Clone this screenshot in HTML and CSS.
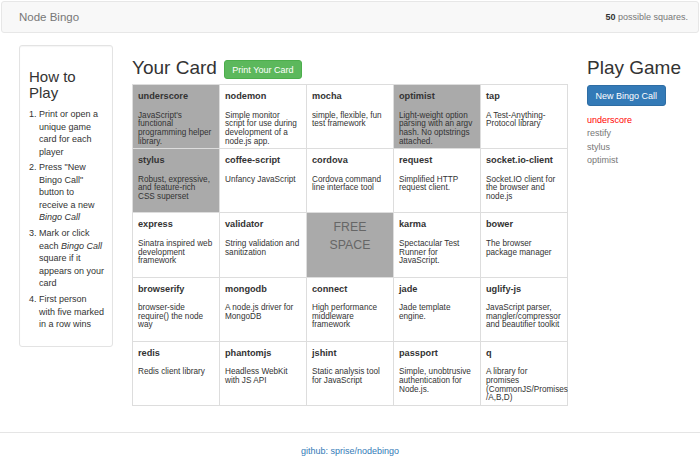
FILE: index.html
```html
<!DOCTYPE html>
<html>
<head>
<meta charset="utf-8">
<title>Node Bingo</title>
<link rel="stylesheet" href="styles.css">
</head>
<body>
<nav class="navbar">
  <span class="brand">Node Bingo</span>
  <span class="count"><b>50</b> possible squares.</span>
</nav>
<div class="page">
  <aside class="well">
    <h3>How to Play</h3>
    <ol>
      <li>Print or open a unique game card for each player</li>
      <li>Press "New Bingo Call" button to receive a new <em>Bingo Call</em></li>
      <li>Mark or click each <em>Bingo Call</em> square if it appears on your card</li>
      <li>First person with five marked in a row wins</li>
    </ol>
  </aside>
  <main class="card-col">
    <div class="card-head">
      <h2>Your Card</h2>
      <button class="btn btn-success">Print Your Card</button>
    </div>
    <div class="board">
      <div class="cell marked"><div class="title">underscore</div><div class="desc">JavaScript's functional programming helper library.</div></div>
      <div class="cell"><div class="title">nodemon</div><div class="desc">Simple monitor script for use during development of a node.js app.</div></div>
      <div class="cell"><div class="title">mocha</div><div class="desc">simple, flexible, fun test framework</div></div>
      <div class="cell marked"><div class="title">optimist</div><div class="desc">Light-weight option parsing with an argv hash. No optstrings attached.</div></div>
      <div class="cell"><div class="title">tap</div><div class="desc">A Test-Anything-Protocol library</div></div>

      <div class="cell marked"><div class="title">stylus</div><div class="desc">Robust, expressive, and feature-rich CSS superset</div></div>
      <div class="cell"><div class="title">coffee-script</div><div class="desc">Unfancy JavaScript</div></div>
      <div class="cell"><div class="title">cordova</div><div class="desc">Cordova command line interface tool</div></div>
      <div class="cell"><div class="title">request</div><div class="desc">Simplified HTTP request client.</div></div>
      <div class="cell"><div class="title">socket.io-client</div><div class="desc">Socket.IO client for the browser and node.js</div></div>

      <div class="cell"><div class="title">express</div><div class="desc">Sinatra inspired web development framework</div></div>
      <div class="cell"><div class="title">validator</div><div class="desc">String validation and sanitization</div></div>
      <div class="cell marked free">FREE<br>SPACE</div>
      <div class="cell"><div class="title">karma</div><div class="desc">Spectacular Test Runner for JavaScript.</div></div>
      <div class="cell"><div class="title">bower</div><div class="desc">The browser package manager</div></div>

      <div class="cell"><div class="title">browserify</div><div class="desc">browser-side require() the node way</div></div>
      <div class="cell"><div class="title">mongodb</div><div class="desc">A node.js driver for MongoDB</div></div>
      <div class="cell"><div class="title">connect</div><div class="desc">High performance middleware framework</div></div>
      <div class="cell"><div class="title">jade</div><div class="desc">Jade template engine.</div></div>
      <div class="cell"><div class="title">uglify-js</div><div class="desc">JavaScript parser, mangler/compressor and beautifier toolkit</div></div>

      <div class="cell"><div class="title">redis</div><div class="desc">Redis client library</div></div>
      <div class="cell"><div class="title">phantomjs</div><div class="desc">Headless WebKit with JS API</div></div>
      <div class="cell"><div class="title">jshint</div><div class="desc">Static analysis tool for JavaScript</div></div>
      <div class="cell"><div class="title">passport</div><div class="desc">Simple, unobtrusive authentication for Node.js.</div></div>
      <div class="cell"><div class="title">q</div><div class="desc">A library for promises (CommonJS/Promises<wbr>/A,B,D)</div></div>
    </div>
  </main>
  <section class="play">
    <h2>Play Game</h2>
    <button class="btn btn-primary">New Bingo Call</button>
    <ul class="calls">
      <li class="current">underscore</li>
      <li>restify</li>
      <li>stylus</li>
      <li>optimist</li>
    </ul>
  </section>
</div>
<footer class="footer">
  <a href="#">github: sprise/nodebingo</a>
</footer>
</body>
</html>
```

FILE: styles.css
```css
body {
  margin: 0;
  font-family: "Liberation Sans", Arial, sans-serif;
  color: #333;
  background: #fff;
}

.navbar {
  margin: 1px 1px 0;
  height: 32px;
  box-sizing: border-box;
  border: 1px solid #e7e7e7;
  border-radius: 3px;
  background: #f8f8f8;
  display: flex;
  align-items: center;
  justify-content: space-between;
  padding: 0 10px 0 17px;
}

.brand {
  font-size: 11.5px;
  color: #777;
}

.count {
  font-size: 9px;
  color: #777;
}

.count b {
  color: #333;
}

.page {
  display: flex;
  align-items: flex-start;
  padding: 0 19px;
  margin-top: 12px;
}

.well {
  width: 94px;
  flex: none;
  box-sizing: border-box;
  border: 1px solid #e3e3e3;
  border-radius: 3px;
  padding: 10px 7.3px 10px 9px;
  background: #fff;
  box-shadow: inset 0 1px 1px rgba(0, 0, 0, 0.04);
}

.well h3 {
  font-size: 15px;
  line-height: 16px;
  font-weight: normal;
  margin: 12.5px 0 7.5px;
}

.well ol {
  margin: 0 0 5.6px;
  padding-left: 10px;
  font-size: 9px;
  line-height: 12.5px;
}

.well li {
  margin-bottom: 3.4px;
}

.well li:last-child {
  margin-bottom: 0;
}

.card-col {
  width: 436px;
  flex: none;
  margin-left: 19px;
  padding-top: 12px;
}

.card-head {
  display: flex;
  align-items: center;
  height: 22px;
  margin-bottom: 5px;
}

h2 {
  font-size: 19px;
  line-height: 22px;
  font-weight: normal;
  margin: 0;
}

.btn {
  font-family: "Liberation Sans", Arial, sans-serif;
  font-size: 9px;
  color: #fff;
  border-radius: 3px;
  border: 1px solid transparent;
  box-sizing: border-box;
  cursor: pointer;
}

.btn-success {
  background: #5cb85c;
  border-color: #4cae4c;
  height: 19px;
  padding: 0 7.5px;
  margin-left: 7px;
  margin-top: 3px;
}

.btn-primary {
  display: block;
  background: #337ab7;
  border-color: #2e6da4;
  height: 21px;
  padding: 0 7.5px;
  margin-top: 6px;
}

.board {
  display: grid;
  grid-template-columns: repeat(5, 86px);
  grid-template-rows: repeat(5, 63.2px);
  gap: 1px;
  padding: 1px;
  background: #ddd;
}

.cell {
  background: #fff;
  padding: 5px;
  min-width: 0;
}

.cell.marked {
  background: #aaa;
}

.title {
  font-weight: bold;
  font-size: 9.2px;
  line-height: 12px;
}

.desc {
  font-size: 8.2px;
  line-height: 8.7px;
  margin-top: 9.5px;
}

.free {
  text-align: center;
  font-size: 12.3px;
  line-height: 18px;
  color: #666;
}

.play {
  flex: 1;
  margin-left: 19px;
  padding-top: 12px;
}

.calls {
  list-style: none;
  margin: 8px 0 0;
  padding: 0;
  font-size: 9px;
  line-height: 13.4px;
  color: #777;
}

.calls .current {
  color: #f00;
}

.footer {
  margin-top: 26px;
  border-top: 1px solid #e5e5e5;
  text-align: center;
  padding-top: 12.5px;
  font-size: 9px;
  line-height: 13px;
}

.footer a {
  color: #337ab7;
  text-decoration: none;
}
```
